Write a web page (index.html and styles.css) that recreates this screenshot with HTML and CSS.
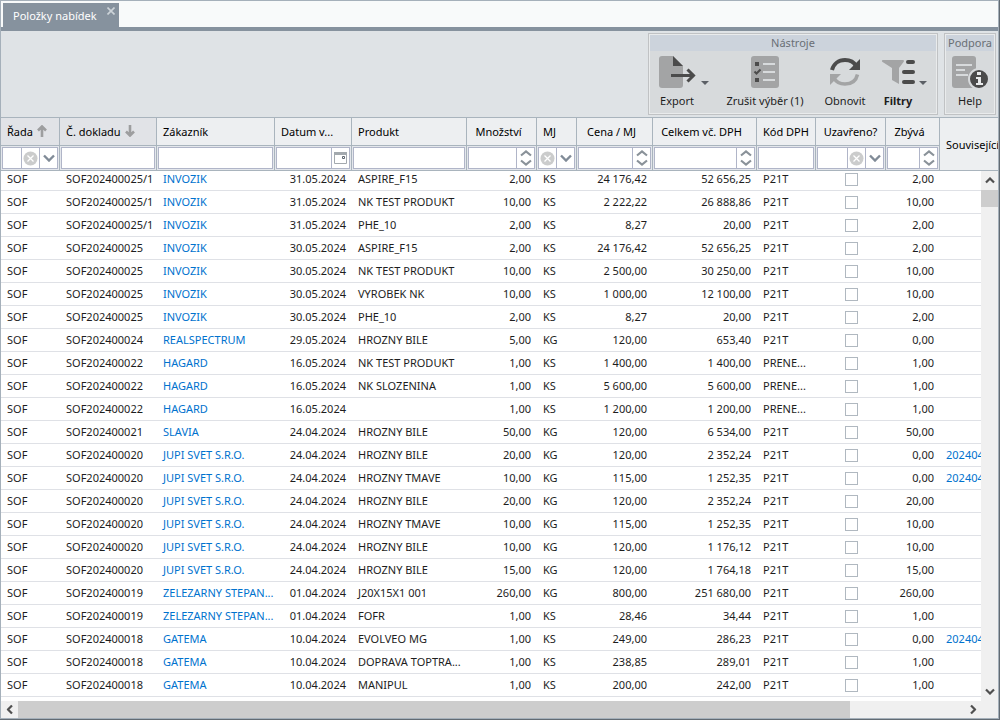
FILE: index.html
```
<!DOCTYPE html>
<html lang="cs">
<head>
    <meta charset="UTF-8">
    <meta name="viewport" content="width=device-width, initial-scale=1.0">
    <title>Položky nabídek</title>
    <link rel="stylesheet" href="styles.css">
</head>
<body>

<!-- Shared icons -->
<svg class="defs" aria-hidden="true">
    <symbol id="clear" viewBox="0 0 15 15">
        <circle cx="7.5" cy="7.5" r="7" fill="#cbcccc"/>
        <path d="M4.5 4.5l6 6M10.5 4.5l-6 6" stroke="#fff" stroke-width="1.3"/>
    </symbol>
    <symbol id="down" viewBox="0 0 12 8">
        <path d="M1 1.5l5 5 5-5" fill="none" stroke="#808b97" stroke-width="2.4"/>
    </symbol>
    <symbol id="spin" viewBox="0 0 12 16">
        <path d="M1 5.5l5-4 5 4M1 10.5l5 4 5-4" fill="none" stroke="#8a9299" stroke-width="2.2"/>
    </symbol>
    <symbol id="calendar" viewBox="0 0 13 12">
        <path d="M.5.5h12v11H.5z" fill="#fff" stroke="#a3a9ae"/>
        <path d="M0 0h13v3H0z" fill="#a3a9ae"/>
        <path d="M8.5 4.5h2v2h-2z" fill="none" stroke="#5e6670"/>
    </symbol>
    <symbol id="sort" viewBox="0 0 10 12">
        <path d="M5 12V2M1 5.500l4-4 4 4" fill="none" stroke="#9d9e9f" stroke-width="2.600"/>
    </symbol>
    <symbol id="chevron" viewBox="0 0 10 7">
        <path d="M1 5.500l4-4 4 4" fill="none" stroke="#505050" stroke-width="2.200"/>
    </symbol>
</svg>

<div class="window">
    <nav class="tabs">
        <div class="tab">
            <a href="#grid">Položky nabídek</a>
            <button class="tab-close" aria-label="Zavřít">
                <svg width="8" height="8" viewBox="0 0 8 8"><path d="M.5.5l7 7M7.500.5l-7 7" stroke="#cdd4d9" stroke-width="1.600"/></svg>
            </button>
        </div>
    </nav>

    <header class="toolbar">
        <section class="group">
            <h2>Nástroje</h2>
            <div class="tools">
                <button class="tool has-menu">
                    <svg width="38" height="34" viewBox="0 0 38 34">
                        <path d="M4 1h11l10 10v19a3 3 0 0 1-3 3H4a3 3 0 0 1-3-3V4a3 3 0 0 1 3-3z" fill="#a3a4a5"/>
                        <path d="M15 1l10 10H15z" fill="#4b4b4b"/>
                        <path d="M13 20.500h22M29.500 14.500l6 6-6 6" fill="none" stroke="#4b4b4b" stroke-width="3"/>
                    </svg>
                    <span>Export</span>
                </button>
                <button class="tool wide">
                    <svg width="30" height="34" viewBox="0 0 30 34">
                        <rect x="1" y="1" width="28" height="32" rx="3" fill="#a3a4a5"/>
                        <path d="M5 7h4v4H5zM5 23h4v4H5z" fill="#4b4b4b"/>
                        <path d="M4.500 16.500l2 2 4-4" fill="none" stroke="#4b4b4b" stroke-width="2"/>
                        <path d="M13 9h12M13 17h12M13 25h12" stroke="#d7dadc" stroke-width="2"/>
                    </svg>
                    <span>Zrušit výběr (1)</span>
                </button>
                <button class="tool refresh">
                    <svg width="32" height="34" viewBox="0 0 32 34">
                        <path d="M3 15C4.500 9 9.500 5 16 5c5 0 9 2 11 6" fill="none" stroke="#4b4b4b" stroke-width="4"/>
                        <path d="M31 4v11H20z" fill="#4b4b4b"/>
                        <path d="M28.500 19.500C27 26 22 29 16 29c-5 0-9-2-11-6" fill="none" stroke="#a3a4a5" stroke-width="3.500"/>
                        <path d="M1 30V19h11z" fill="#a3a4a5"/>
                    </svg>
                    <span>Obnovit</span>
                </button>
                <button class="tool has-menu active">
                    <svg width="34" height="34" viewBox="0 0 34 34">
                        <path d="M2 5h20a1 1 0 0 1 .7 1.700L18 13v16l-7-4V13L1.200 6.700A1 1 0 0 1 2 5z" fill="#a3a4a5"/>
                        <path d="M27 7h5M23 17h9M23 27h9" stroke="#4b4b4b" stroke-width="4" stroke-linecap="round"/>
                    </svg>
                    <span>Filtry</span>
                </button>
            </div>
        </section>
        <section class="group">
            <h2>Podpora</h2>
            <div class="tools">
                <button class="tool help">
                    <svg width="38" height="34" viewBox="0 0 38 34">
                        <rect x="1" y="1" width="24" height="32" rx="3" fill="#a3a4a5"/>
                        <path d="M5 10h16M5 15h9M5 20h12" stroke="#d7dadc" stroke-width="2"/>
                        <circle cx="28" cy="24" r="10" fill="#4b4b4b" stroke="#d7dadc" stroke-width="2"/>
                        <path d="M26 17h4v3h-4zM25 22h5v6h2v2h-7v-2h2v-4h-2z" fill="#e8eaeb"/>
                    </svg>
                    <span>Help</span>
                </button>
            </div>
        </section>
    </header>

    <main class="grid" id="grid">
        <table class="head">
            <colgroup class="cols"></colgroup>
            <thead>
                <tr class="titles">
                    <th class="sorted">Řada <svg width="10" height="12"><use href="#sort"/></svg></th>
                    <th class="sorted">Č. dokladu <svg class="desc" width="10" height="12"><use href="#sort"/></svg></th>
                    <th>Zákazník</th>
                    <th>Datum v...</th>
                    <th>Produkt</th>
                    <th class="mid">Množství</th>
                    <th>MJ</th>
                    <th class="mid">Cena / MJ</th>
                    <th class="mid">Celkem vč. DPH</th>
                    <th>Kód DPH</th>
                    <th class="mid check">Uzavřeno?</th>
                    <th class="mid">Zbývá</th>
                    <th rowspan="2">Související</th>
                </tr>
                <tr class="filters"></tr>
            </thead>
        </table>

        <div class="view">
            <div class="rows">
                <table class="body">
                    <colgroup class="cols"></colgroup>
                    <tbody id="items"></tbody>
                </table>
            </div>
            <div class="vscroll">
                <button aria-label="Nahoru"><svg width="10" height="7"><use href="#chevron"/></svg></button>
                <div class="thumb"></div>
                <button class="end" aria-label="Dolů"><svg class="flip" width="10" height="7"><use href="#chevron"/></svg></button>
            </div>
        </div>

        <div class="hscroll">
            <button aria-label="Vlevo"><svg class="left" width="10" height="7"><use href="#chevron"/></svg></button>
            <div class="track"><div class="thumb"></div></div>
            <button aria-label="Vpravo"><svg class="right" width="10" height="7"><use href="#chevron"/></svg></button>
        </div>
    </main>
</div>

<script>
    // name, column class, filter buttons
    const columns = [
        ["Řada", "c-rada", ["clear", "down"]],
        ["Č. dokladu", "c-doklad", []],
        ["Zákazník", "c-zakaznik", []],
        ["Datum", "c-datum", ["calendar"]],
        ["Produkt", "c-produkt", []],
        ["Množství", "c-mnozstvi", ["spin"]],
        ["MJ", "c-mj", ["clear", "down"]],
        ["Cena / MJ", "c-cena", ["spin"]],
        ["Celkem vč. DPH", "c-celkem", ["spin"]],
        ["Kód DPH", "c-kod", []],
        ["Uzavřeno?", "c-uzavreno", ["clear", "down"]],
        ["Zbývá", "c-zbyva", ["spin"]]
    ];
    const iconSize = { clear: [15, 15], down: [12, 8], spin: [12, 16], calendar: [13, 12] };

    // doklad | zákazník | datum | produkt | množství | MJ | cena | celkem | kód | zbývá | související
    const data = `
SOF202400025/1|INVOZIK|31.05.2024|ASPIRE_F15|2,00|KS|24 176,42|52 656,25|P21T|2,00|
SOF202400025/1|INVOZIK|31.05.2024|NK TEST PRODUKT|10,00|KS|2 222,22|26 888,86|P21T|10,00|
SOF202400025/1|INVOZIK|31.05.2024|PHE_10|2,00|KS|8,27|20,00|P21T|2,00|
SOF202400025|INVOZIK|30.05.2024|ASPIRE_F15|2,00|KS|24 176,42|52 656,25|P21T|2,00|
SOF202400025|INVOZIK|30.05.2024|NK TEST PRODUKT|10,00|KS|2 500,00|30 250,00|P21T|10,00|
SOF202400025|INVOZIK|30.05.2024|VYROBEK NK|10,00|KS|1 000,00|12 100,00|P21T|10,00|
SOF202400025|INVOZIK|30.05.2024|PHE_10|2,00|KS|8,27|20,00|P21T|2,00|
SOF202400024|REALSPECTRUM|29.05.2024|HROZNY BILE|5,00|KG|120,00|653,40|P21T|0,00|
SOF202400022|HAGARD|16.05.2024|NK TEST PRODUKT|1,00|KS|1 400,00|1 400,00|PRENE...|1,00|
SOF202400022|HAGARD|16.05.2024|NK SLOZENINA|1,00|KS|5 600,00|5 600,00|PRENE...|1,00|
SOF202400022|HAGARD|16.05.2024||1,00|KS|1 200,00|1 200,00|PRENE...|1,00|
SOF202400021|SLAVIA|24.04.2024|HROZNY BILE|50,00|KG|120,00|6 534,00|P21T|50,00|
SOF202400020|JUPI SVET S.R.O.|24.04.2024|HROZNY BILE|20,00|KG|120,00|2 352,24|P21T|0,00|202404
SOF202400020|JUPI SVET S.R.O.|24.04.2024|HROZNY TMAVE|10,00|KG|115,00|1 252,35|P21T|0,00|202404
SOF202400020|JUPI SVET S.R.O.|24.04.2024|HROZNY BILE|20,00|KG|120,00|2 352,24|P21T|20,00|
SOF202400020|JUPI SVET S.R.O.|24.04.2024|HROZNY TMAVE|10,00|KG|115,00|1 252,35|P21T|10,00|
SOF202400020|JUPI SVET S.R.O.|24.04.2024|HROZNY BILE|10,00|KG|120,00|1 176,12|P21T|10,00|
SOF202400020|JUPI SVET S.R.O.|24.04.2024|HROZNY BILE|15,00|KG|120,00|1 764,18|P21T|15,00|
SOF202400019|ZELEZARNY STEPAN...|01.04.2024|J20X15X1 001|260,00|KG|800,00|251 680,00|P21T|260,00|
SOF202400019|ZELEZARNY STEPAN...|01.04.2024|FOFR|1,00|KS|28,46|34,44|P21T|1,00|
SOF202400018|GATEMA|10.04.2024|EVOLVEO MG|1,00|KS|249,00|286,23|P21T|0,00|202404
SOF202400018|GATEMA|10.04.2024|DOPRAVA TOPTRA...|1,00|KS|238,85|289,01|P21T|1,00|
SOF202400018|GATEMA|10.04.2024|MANIPUL|1,00|KS|200,00|242,00|P21T|1,00|`;

    document.querySelectorAll(".cols").forEach(group => {
        group.innerHTML = columns.map(c => `<col class="${c[1]}">`).join("") + "<col>";
    });

    document.querySelector(".filters").innerHTML = columns.map(([name, col, buttons]) => {
        const btns = buttons.map(b =>
            `<button class="f-${b}" aria-label="${name}: ${b}"><svg width="${iconSize[b][0]}" height="${iconSize[b][1]}"><use href="#${b}"/></svg></button>`
        ).join("");
        const narrow = col === "c-mj" ? " narrow" : "";
        return `<td><div class="filter${narrow}"><input type="text" aria-label="Filtr ${name}">${btns}</div></td>`;
    }).join("");

    const link = text => text ? `<a href="#grid">${text}</a>` : "";

    document.getElementById("items").innerHTML = data.trim().split("\n").map(line => {
        const [doc, customer, date, product, qty, unit, price, total, vat, left, related] = line.split("|");
        return `<tr>
            <td>SOF</td><td>${doc}</td><td>${link(customer)}</td><td class="num">${date}</td>
            <td>${product}</td><td class="num">${qty}</td><td>${unit}</td><td class="num">${price}</td>
            <td class="num">${total}</td><td>${vat}</td>
            <td class="check"><input type="checkbox" aria-label="Uzavřeno ${doc}"></td>
            <td class="num">${left}</td><td>${link(related)}</td>
        </tr>`;
    }).join("");
</script>
</body>
</html>
```
FILE: styles.css
```
* {
    box-sizing: border-box;
}
body {
    margin: 0;
    height: 100vh;
    padding: 0 1px 1px 0;
    background-color: #626b73;
    font-family: "Noto Sans", sans-serif;
    font-size: 11px;
    color: #1d1d1d;
    overflow: hidden;
}
button {
    border: none;
    padding: 0;
    background: none;
    font: inherit;
    color: inherit;
}
a {
    color: #0072ce;
    text-decoration: none;
}
svg {
    display: block;
}
.defs {
    display: none;
}
.window {
    height: 100%;
    display: flex;
    flex-direction: column;
    border: 1px solid #a5b0ba;
}

/* Tabs */
.tabs {
    display: flex;
    height: 30px;
    padding: 2px 2px 0;
    background-color: #f8fafa;
    border-bottom: 4px solid #86929e;
    flex: none;
}
.tab {
    display: flex;
    align-items: flex-start;
    gap: 10px;
    padding: 0 4px 0 10px;
    background-color: #86929e;
}
.tab a {
    color: #fff;
    line-height: 26px;
}
.tab-close {
    padding-top: 4px;
}

/* Toolbar */
.toolbar {
    display: flex;
    justify-content: flex-end;
    gap: 6px;
    padding: 2px;
    height: 87px;
    flex: none;
    background-color: #dfe3e6;
    border-bottom: 1px solid #a9b4bd;
}
.group {
    border: 1px solid #c0c2c4;
    outline: 1px solid #e9ebec;
    outline-offset: -2px;
    padding: 1px;
    background-color: #d7dadc;
}
.group h2 {
    margin: 0;
    font-size: 11px;
    font-weight: normal;
    line-height: 16px;
    color: #6a6f75;
    text-align: center;
    background-color: #ccd3dc;
}
.tools {
    display: flex;
    padding: 4px 2px;
}
.tool {
    position: relative;
    display: flex;
    flex-direction: column;
    align-items: center;
    gap: 4px;
    line-height: 16px;
}
.tool.has-menu {
    width: 60px;
    padding-right: 10px;
}
.tool.has-menu::after {
    content: "";
    position: absolute;
    right: 3px;
    top: 26px;
    border: 4px solid transparent;
    border-top-color: #5c6066;
    border-bottom: 0;
}
.tool.wide {
    width: 106px;
}
.tool.refresh {
    width: 54px;
}
.tool.help {
    width: 44px;
}
.tool.active {
    width: 62px;
    font-weight: bold;
}
.tool.active::after {
    right: 7px;
}

/* Grid */
.grid {
    flex: 1;
    min-height: 0;
    display: flex;
    flex-direction: column;
    background-color: #fff;
}
table {
    width: 100%;
    table-layout: fixed;
    border-collapse: separate;
    border-spacing: 0;
}
.c-rada { width: 59px; }
.c-doklad { width: 97px; }
.c-zakaznik { width: 118px; }
.c-datum { width: 77px; }
.c-produkt { width: 115px; }
.c-mnozstvi { width: 70px; }
.c-mj { width: 40px; }
.c-cena { width: 76px; }
.c-celkem { width: 104px; }
.c-kod { width: 59px; }
.c-uzavreno { width: 70px; }
.c-zbyva { width: 54px; }

th, td {
    padding: 0 0 0 6px;
    white-space: nowrap;
    overflow: hidden;
    text-align: left;
}
th {
    height: 28px;
    font-weight: normal;
    color: #000;
    background-color: #edeff1;
    border-right: 1px solid #a9b4bd;
    border-bottom: 1px solid #a9b4bd;
}
th:last-child {
    border-right: none;
}
th.sorted {
    background-color: #e1e3e7;
}
th.mid {
    padding: 0 6px 0 0;
    text-align: center;
}
th.check {
    padding: 0;
}
th svg {
    display: inline-block;
    margin-left: 1px;
    vertical-align: -1px;
}
.desc, .flip {
    transform: rotate(180deg);
}
.filters td {
    height: 25px;
    padding: 1px;
    background-color: #e4e7ec;
    border-right: 1px solid #a9b4bd;
    border-bottom: 1px solid #a9b4bd;
}
.filter {
    display: flex;
    height: 22px;
    background-color: #fff;
    border: 1px solid #b0b5c8;
}
.filter input {
    flex: 1;
    min-width: 0;
    width: 0;
    border: none;
    padding: 0;
    background: none;
    font: inherit;
}
.filter button {
    display: flex;
    align-items: center;
    justify-content: center;
    width: 18px;
    border-left: 1px solid #b0b5c8;
}
.narrow .f-clear {
    border-left: none;
}

.view {
    flex: 1;
    min-height: 0;
    display: flex;
}
.rows {
    flex: 1;
    min-width: 0;
    overflow: hidden;
}
/* list is scrolled slightly under the header */
.body {
    margin-top: -3px;
}
.body td {
    height: 23px;
    padding-bottom: 2px;
    border-bottom: 1px solid #dfe1e6;
}
.body td.num {
    padding: 0 6px 2px 0;
    text-align: right;
}
.body td.check {
    padding: 0;
}
.check input {
    appearance: none;
    display: block;
    width: 13px;
    height: 13px;
    margin: 0 auto;
    border: 1px solid #b0b8c0;
    background-color: #fff;
}

/* Scrollbars */
.vscroll, .hscroll {
    display: flex;
    flex: none;
    background-color: #f0f0f0;
}
.vscroll {
    flex-direction: column;
    width: 17px;
}
.vscroll button, .hscroll button {
    display: flex;
    align-items: center;
    justify-content: center;
    width: 17px;
    height: 17px;
}
.vscroll button {
    height: 19px;
}
.vscroll .thumb {
    height: 17px;
    background-color: #cdcdcd;
}
.vscroll .end {
    margin-top: auto;
}
.hscroll {
    padding-right: 17px;
}
.track {
    flex: 1;
}
.hscroll .thumb {
    width: 88%;
    height: 17px;
    background-color: #cdcdcd;
}
.left {
    transform: rotate(-90deg);
}
.right {
    transform: rotate(90deg);
}
```
